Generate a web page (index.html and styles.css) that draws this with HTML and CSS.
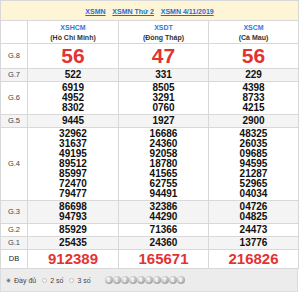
FILE: index.html
```html
<!DOCTYPE html>
<html lang="vi">
<head>
  <meta charset="UTF-8">
  <title>XSMN 4/11/2019</title>
  <link rel="stylesheet" href="styles.css">
</head>
<body>
<div class="box">
  <table class="kq">
    <colgroup>
      <col class="c-g">
      <col class="c-1">
      <col class="c-2">
      <col class="c-3">
    </colgroup>
    <tr class="top">
      <td colspan="4">
        <a href="#">XSMN</a>
        <a href="#">XSMN Thứ 2</a>
        <a href="#">XSMN 4/11/2019</a>
      </td>
    </tr>
    <tr class="tinh">
      <td class="g"></td>
      <td><a href="#">XSHCM</a><b>(Hồ Chí Minh)</b></td>
      <td><a href="#">XSDT</a><b>(Đồng Tháp)</b></td>
      <td><a href="#">XSCM</a><b>(Cà Mau)</b></td>
    </tr>
    <tr class="g8">
      <td class="g">G.8</td><td>56</td><td>47</td><td>56</td>
    </tr>
    <tr class="alt">
      <td class="g">G.7</td><td>522</td><td>331</td><td>229</td>
    </tr>
    <tr>
      <td class="g">G.6</td>
      <td>6919<br>4952<br>8302</td>
      <td>8505<br>3291<br>0760</td>
      <td>4398<br>8733<br>4215</td>
    </tr>
    <tr class="alt">
      <td class="g">G.5</td><td>9445</td><td>1927</td><td>2900</td>
    </tr>
    <tr>
      <td class="g">G.4</td>
      <td>32962<br>31637<br>49195<br>89512<br>85997<br>72470<br>79477</td>
      <td>16686<br>24360<br>92058<br>18780<br>41565<br>62755<br>94491</td>
      <td>48325<br>26035<br>09685<br>94595<br>21287<br>52965<br>04034</td>
    </tr>
    <tr class="alt">
      <td class="g">G.3</td>
      <td>86698<br>94793</td>
      <td>32386<br>44290</td>
      <td>04726<br>04825</td>
    </tr>
    <tr>
      <td class="g">G.2</td><td>85929</td><td>71366</td><td>24473</td>
    </tr>
    <tr class="alt">
      <td class="g">G.1</td><td>25435</td><td>24360</td><td>13776</td>
    </tr>
    <tr class="db">
      <td class="g">DB</td><td>912389</td><td>165671</td><td>216826</td>
    </tr>
  </table>

  <div class="tools">
    <label class="radio on"><span class="dot"></span>Đầy đủ</label>
    <label class="radio"><span class="dot"></span>2 số</label>
    <label class="radio"><span class="dot"></span>3 số</label>
    <div class="balls">
      <span>0</span><span>1</span><span>2</span><span>3</span><span>4</span>
      <span>5</span><span>6</span><span>7</span><span>8</span><span>9</span>
    </div>
  </div>
</div>
</body>
</html>
```

FILE: styles.css
```css
* { box-sizing: border-box; }

body {
  margin: 0;
  background: #fff;
  font-family: "Liberation Sans", Arial, sans-serif;
  color: #222;
}

.box {
  width: 298px;
}

.kq {
  width: 298px;
  border-collapse: collapse;
  table-layout: fixed;
}

.c-g { width: 27px; }
.c-1 { width: 91px; }
.c-2 { width: 90px; }
.c-3 { width: 90px; }

.kq td {
  border: 1px solid #d8d8d8;
  padding: 1px 0 1px;
  text-align: center;
  font-size: 10px;
  line-height: 10px;
  font-weight: bold;
  color: #111;
}

.kq .g {
  font-size: 7.5px;
  font-weight: normal;
  color: #444;
}

.kq .alt td { background: #f4f4f4; }

/* dòng đầu */
.kq .top td {
  background: #fdf5d5;
  height: 20px;
  line-height: 17px;
  padding: 0;
}
.kq .top a {
  color: #1a6fd8;
  font-size: 7px;
  font-weight: bold;
  margin: 0 2px;
}

.kq .tinh td {
  height: 23px;
  line-height: 10px;
  padding: 1px 0 0;
}
.kq .tinh a {
  display: block;
  color: #2a7ae0;
  font-size: 7px;
  text-decoration: none;
}
.kq .tinh b {
  display: block;
  font-size: 7px;
  color: #333;
}

.kq .g8 td {
  height: 24px;
  line-height: 22px;
  font-size: 21px;
  color: #e23333;
}
.kq .g8 .g,
.kq .db .g {
  font-size: 7.5px;
  color: #444;
}

.kq .db td {
  height: 18px;
  line-height: 16px;
  font-size: 15px;
  color: #e23333;
}
.kq .db .g { color: #222; }

/* thanh công cụ */
.tools {
  display: flex;
  align-items: center;
  height: 23px;
  background: #ececec;
  border: 1px solid #dcdcdc;
  border-top: none;
  padding-left: 5px;
  font-size: 7px;
  color: #444;
}

.radio {
  display: flex;
  align-items: center;
  gap: 3px;
  margin-right: 6px;
}

.dot {
  width: 5px;
  height: 5px;
  border-radius: 999px;
  border: 1px solid #c4c4c4;
  background: #f8f8f8;
}
.radio.on .dot {
  background: radial-gradient(circle, #777 0 1.2px, #f8f8f8 1.6px);
}

.balls {
  display: flex;
  margin-left: 8px;
}
.balls span {
  width: 8px;
  height: 8px;
  border-radius: 999px;
  background: radial-gradient(circle at 35% 30%, #f2f2f2, #a8a8a8 70%, #888);
  color: #fff;
  font-size: 5px;
  line-height: 8px;
  text-align: center;
  font-weight: bold;
}
```
